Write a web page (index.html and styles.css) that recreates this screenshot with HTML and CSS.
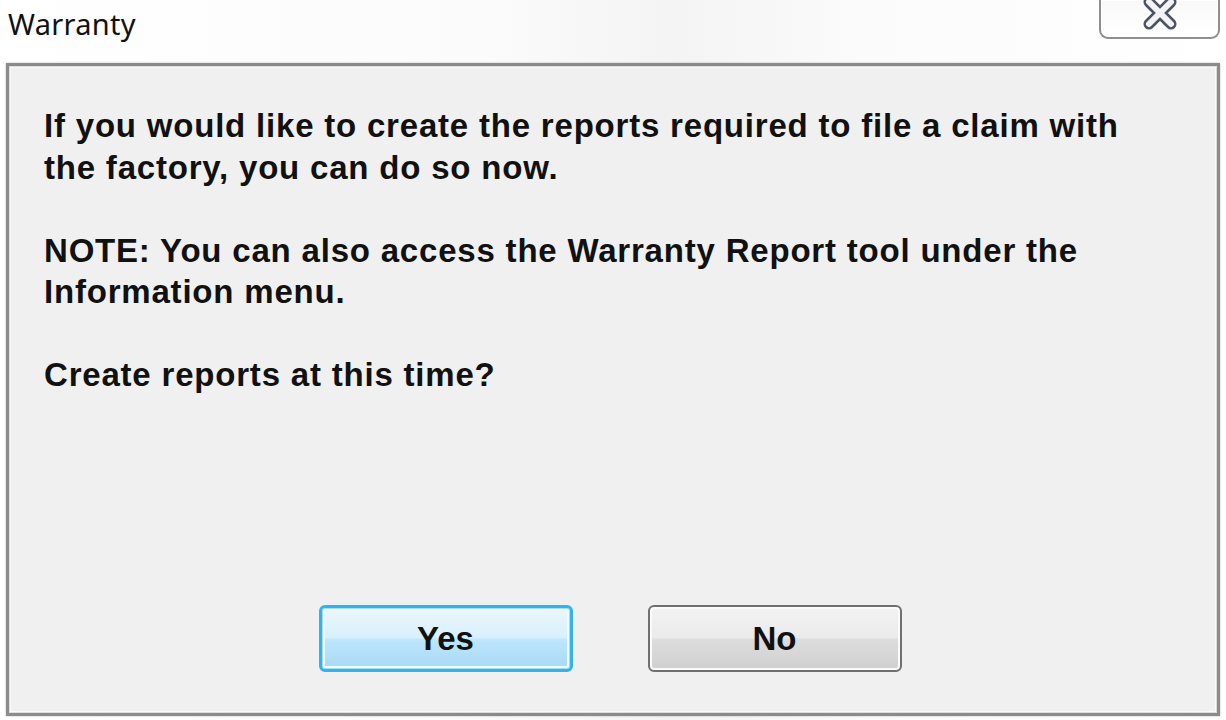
FILE: index.html
```html
<!DOCTYPE html>
<html>
<head>
<meta charset="utf-8">
<link rel="stylesheet" href="styles.css">
</head>
<body>
<div class="window">
  <div class="titlebar">
    <div class="title">Warranty</div>
    <div class="close">
      <svg width="40" height="32" viewBox="0 0 40 32">
        <g stroke-linecap="round">
          <path d="M9 3 L31 25 M31 3 L9 25" stroke="#4b5263" stroke-width="11"/>
          <path d="M9 3 L31 25 M31 3 L9 25" stroke="#f3f3f5" stroke-width="6"/>
        </g>
      </svg>
    </div>
  </div>
  <div class="panel">
    <div class="message">
      <p>If you would like to create the reports required to file a claim with the factory, you can do so now.</p>
      <p>NOTE: You can also access the Warranty Report tool under the Information menu.</p>
      <p>Create reports at this time?</p>
    </div>
    <div class="buttons">
      <button class="btn btn-default">Yes</button>
      <button class="btn">No</button>
    </div>
  </div>
</div>
</body>
</html>
```

FILE: styles.css
```css
html, body {
  margin: 0;
  padding: 0;
}
body {
  width: 1226px;
  height: 720px;
  overflow: hidden;
  background: linear-gradient(90deg, #ffffff 0%, #fbfbfb 40%, #f4f4f4 55%, #fbfbfb 70%, #ffffff 100%);
  font-family: "Liberation Sans", Arial, sans-serif;
}
.window {
  display: flex;
  flex-direction: column;
  height: 720px;
}
.titlebar {
  height: 63px;
  display: flex;
  justify-content: space-between;
  align-items: flex-start;
  flex-shrink: 0;
}
.title {
  font-family: "Noto Sans", "Open Sans", sans-serif;
  font-size: 29px;
  color: #111;
  padding: 4px 0 0 8px;
  letter-spacing: 0.3px;
}
.close {
  width: 117px;
  height: 37px;
  margin-right: 6px;
  border: 2px solid #8f8f8f;
  border-top: none;
  border-radius: 0 0 9px 9px;
  background: linear-gradient(180deg, #f9f9f9 0%, #ffffff 100%);
  box-shadow: inset 0 0 0 1px #ffffff;
  display: flex;
  justify-content: center;
  align-items: flex-start;
}
.close svg {
  margin-top: -1px;
}
.panel {
  margin: 0 6px;
  height: 647px;
  border: 3px solid #8b8b8b;
  box-shadow: inset 0 0 0 1px #dcdcdc, inset 0 0 0 2px #fafafa, 0 0 2px rgba(0,0,0,0.25);
  background: #f0f0f0;
  display: flex;
  flex-direction: column;
}
.message {
  padding: 39px 0 0 35px;
  font-weight: bold;
  font-size: 33px;
  line-height: 41.5px;
  letter-spacing: 0.8px;
  color: #111;
}
.message p {
  margin: 0 0 41.5px 0;
  max-width: 1100px;
}
.buttons {
  margin-top: auto;
  margin-bottom: 41px;
  display: flex;
  justify-content: center;
  gap: 75px;
  padding-right: 6px;
}
.btn {
  width: 254px;
  height: 67px;
  border-radius: 6px;
  border: 2px solid #707070;
  box-shadow: inset 0 0 0 2px #fbfbfb;
  background: linear-gradient(180deg, #f2f2f2 0%, #ebebeb 48%, #dddddd 52%, #cfcfcf 100%);
  font-family: "Liberation Sans", Arial, sans-serif;
  font-weight: bold;
  font-size: 33px;
  color: #111;
  padding: 0;
}
.btn-default {
  border: 3px solid #33b3ea;
  box-shadow: inset 0 0 0 1px #9fdff7, inset 0 0 0 3px #f0faff;
  background: linear-gradient(180deg, #eaf6fd 0%, #d9f0fc 48%, #bee6fd 52%, #a7d9f5 100%);
}
```
